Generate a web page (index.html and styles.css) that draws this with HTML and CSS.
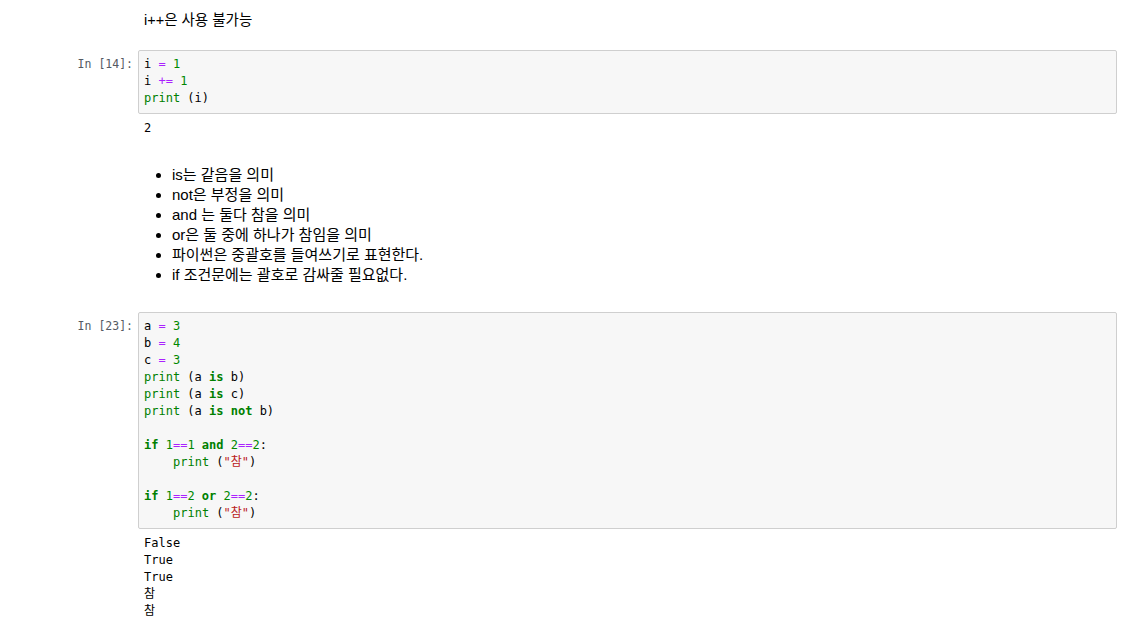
FILE: index.html
```html
<!DOCTYPE html>
<html lang="ko">
<head>
<meta charset="utf-8">
<link rel="stylesheet" href="styles.css">
</head>
<body>
<div class="notebook">
  <div class="cell md first">
    <div class="prompt"></div>
    <div class="md-body"><p>i++은 사용 불가능</p></div>
  </div>

  <div class="cell code c1">
    <div class="prompt">In&nbsp;[14]:</div>
    <div class="code-col">
      <div class="input">
        <div class="ln">i <span class="o">=</span> <span class="n">1</span></div>
        <div class="ln">i <span class="o">+=</span> <span class="n">1</span></div>
        <div class="ln"><span class="b">print</span> (i)</div>
      </div>
      <div class="output">
        <div class="ln">2</div>
      </div>
    </div>
  </div>

  <div class="cell md list">
    <div class="prompt"></div>
    <div class="md-body">
      <ul>
        <li>is는 같음을 의미</li>
        <li>not은 부정을 의미</li>
        <li>and 는 둘다 참을 의미</li>
        <li>or은 둘 중에 하나가 참임을 의미</li>
        <li>파이썬은 중괄호를 들여쓰기로 표현한다.</li>
        <li>if 조건문에는 괄호로 감싸줄 필요없다.</li>
      </ul>
    </div>
  </div>

  <div class="cell code c2">
    <div class="prompt">In&nbsp;[23]:</div>
    <div class="code-col">
      <div class="input">
        <div class="ln">a <span class="o">=</span> <span class="n">3</span></div>
        <div class="ln">b <span class="o">=</span> <span class="n">4</span></div>
        <div class="ln">c <span class="o">=</span> <span class="n">3</span></div>
        <div class="ln"><span class="b">print</span> (a <span class="k">is</span> b)</div>
        <div class="ln"><span class="b">print</span> (a <span class="k">is</span> c)</div>
        <div class="ln"><span class="b">print</span> (a <span class="k">is</span> <span class="k">not</span> b)</div>
        <div class="ln blank"></div>
        <div class="ln"><span class="k">if</span> <span class="n">1</span><span class="o">==</span><span class="n">1</span> <span class="k">and</span> <span class="n">2</span><span class="o">==</span><span class="n">2</span>:</div>
        <div class="ln indent"><span class="b">print</span> (<span class="s">"참"</span>)</div>
        <div class="ln blank"></div>
        <div class="ln"><span class="k">if</span> <span class="n">1</span><span class="o">==</span><span class="n">2</span> <span class="k">or</span> <span class="n">2</span><span class="o">==</span><span class="n">2</span>:</div>
        <div class="ln indent"><span class="b">print</span> (<span class="s">"참"</span>)</div>
      </div>
      <div class="output">
        <div class="ln">False</div>
        <div class="ln">True</div>
        <div class="ln">True</div>
        <div class="ln">참</div>
        <div class="ln">참</div>
      </div>
    </div>
  </div>
</div>
</body>
</html>
```

FILE: styles.css
```css
html, body {
  margin: 0;
  padding: 0;
  background: #ffffff;
}

body {
  font-family: "Liberation Sans", Arial, "Noto Sans CJK KR", sans-serif;
  font-size: 14.5px;
  color: #000;
}

.notebook {
  width: 1117px;
}

.cell {
  display: flex;
  align-items: flex-start;
}

.prompt {
  width: 133px;
  flex: none;
  padding-right: 5px;
  text-align: right;
  font-family: "DejaVu Sans Mono", "Liberation Mono", "Noto Sans CJK KR", monospace;
  font-size: 11.5px;
  line-height: 17px;
  color: #555a63;
  padding-top: 6px;
}

.md-body {
  flex: 1;
  padding-left: 6px;
}

.md-body p {
  margin: 0;
  line-height: 20px;
}

.cell.first {
  padding-top: 10px;
  height: 40px;
}

.code-col {
  flex: 1;
  min-width: 0;
}

.input,
.output {
  font-family: "DejaVu Sans Mono", "Liberation Mono", "Noto Sans CJK KR", monospace;
  font-size: 12px;
  line-height: 17px;
  color: #000;
}

.ln {
  white-space: pre;
  height: 17px;
}

.ln.indent {
  padding-left: 29px;
}

.input {
  background: #f7f7f7;
  border: 1px solid #cfcfcf;
  border-radius: 2px;
  padding: 5px 5px 6px 5px;
}

.output {
  padding: 6px 5px 0 6px;
}

.o { color: #aa22ff; }
.n { color: #008800; }
.b { color: #008000; }
.k { color: #008000; font-weight: bold; }
.s { color: #ba2121; }

.cell.list {
  padding-top: 28px;
  height: 147px;
}

.md-body ul {
  margin: 0;
  padding-left: 28px;
  list-style: disc;
  font-size: 15px;
}

.md-body li {
  line-height: 20px;
}
```
